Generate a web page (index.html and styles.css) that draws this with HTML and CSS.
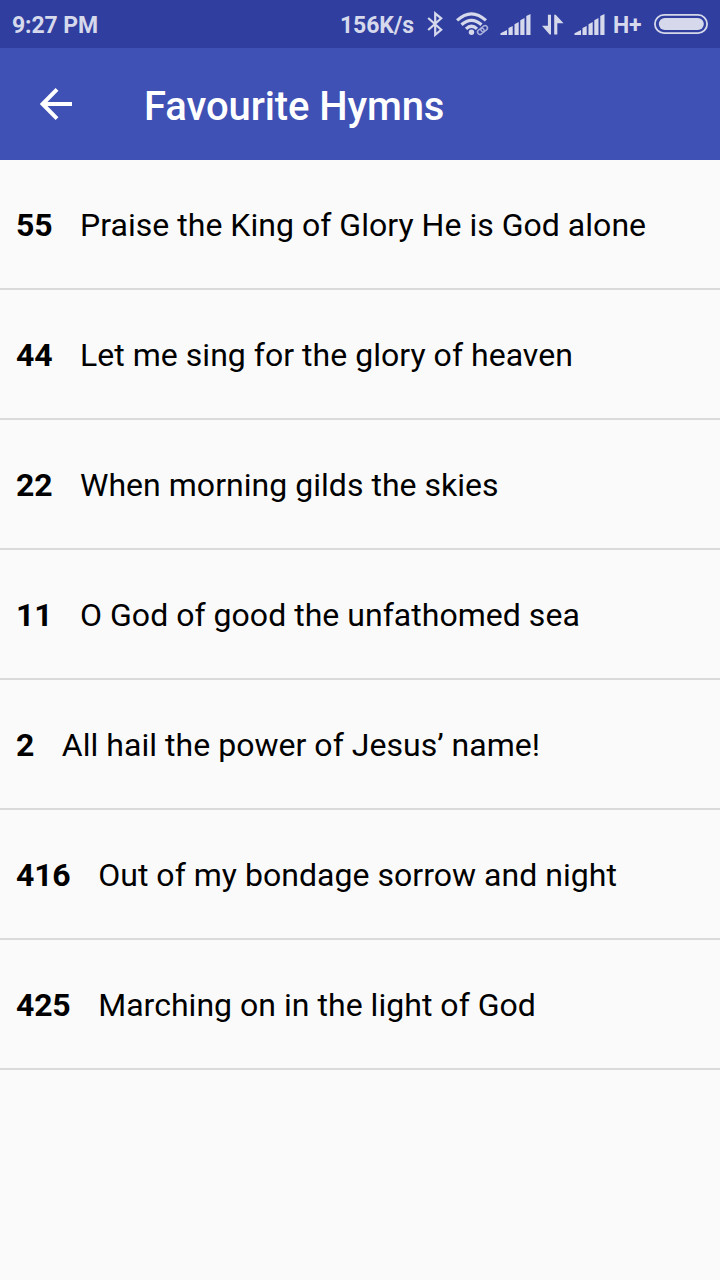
FILE: index.html
```html
<!DOCTYPE html>
<html lang="en">
<head>
<meta charset="UTF-8">
<meta name="viewport" content="width=device-width, initial-scale=1">
<title>Favourite Hymns</title>
<link rel="stylesheet" href="styles.css">
</head>
<body>
<div class="status_bar">
	<span class="time">9:27 PM</span>
	<div class="status_icons">
		<span class="speed">156K/s</span>
		<svg class="bluetooth" width="16" height="26" viewBox="0 0 16 26">
			<path d="M1.2 7 L14.2 18.8 L8.2 23.8 V2.4 L14.2 7.4 L1.2 19"/>
		</svg>
		<svg class="wifi" width="34" height="26" viewBox="0 0 34 26">
			<path class="wave" d="M1.1 9.4 Q15.5 -3.8 29.9 9.4"/>
			<path class="wave" d="M5.5 13.8 Q15.5 4.8 25.5 13.8"/>
			<path class="wave" d="M10 17.8 Q15.5 12.6 21 17.8"/>
			<circle cx="15.5" cy="21.3" r="2.7"/>
			<g class="link" transform="rotate(-38 26.5 19)">
				<rect x="20.9" y="16.6" width="7" height="4.8" rx="2.4"/>
				<rect x="25.1" y="16.6" width="7" height="4.8" rx="2.4"/>
			</g>
		</svg>
		<svg class="signal" width="31" height="22" viewBox="0 0 31 22">
			<path d="M0.5 21 V19.2 L7 16 V21 Z M8.5 21 V14 L12.7 12 V21 Z M14.5 21 V10.2 L18.7 8 V21 Z M20.3 21 V6.2 L24.5 4 V21 Z M26.3 21 V2 L30.5 0 V21 Z"/>
		</svg>
		<svg class="data" width="22" height="22" viewBox="0 0 22 22">
			<path d="M5.9 0.8 H9 V20.5 H7.6 L0 11.8 H5.9 Z M12.2 20.5 V0.8 H13.7 L21.5 9.2 H15.3 V20.5 Z"/>
		</svg>
		<svg class="signal signal_two" width="31" height="22" viewBox="0 0 31 22">
			<path d="M0.5 21 V19.2 L7 16 V21 Z M8.5 21 V14 L12.7 12 V21 Z M14.5 21 V10.2 L18.7 8 V21 Z M20.3 21 V6.2 L24.5 4 V21 Z M26.3 21 V2 L30.5 0 V21 Z"/>
		</svg>
		<span class="network">H+</span>
		<svg class="battery" width="54" height="20" viewBox="0 0 54 20">
			<rect class="shell" x="0.9" y="0.9" width="52.2" height="18.2" rx="9.1"/>
			<rect x="4.8" y="4" width="45" height="12" rx="6"/>
		</svg>
	</div>
</div>
<div class="toolbar">
	<svg class="back" width="32" height="32" viewBox="0 0 32 32">
		<path d="M32 16 H3 M17 1.4 L2.6 16 L17 30.6"/>
	</svg>
	<h1 class="title">Favourite Hymns</h1>
</div>
<ul class="hymn_list">
	<li><b>55</b><span>Praise the King of Glory He is God alone</span></li>
	<li><b>44</b><span>Let me sing for the glory of heaven</span></li>
	<li><b>22</b><span>When morning gilds the skies</span></li>
	<li><b>11</b><span>O God of good the unfathomed sea</span></li>
	<li><b>2</b><span>All hail the power of Jesus’ name!</span></li>
	<li><b>416</b><span>Out of my bondage sorrow and night</span></li>
	<li><b>425</b><span>Marching on in the light of God</span></li>
</ul>
</body>
</html>
```
FILE: styles.css
```css
body {
	margin: 0;
	background: #fafafa;
	color: #000;
	font-family: Roboto, "Liberation Sans", sans-serif;
}
.status_bar {
	display: flex;
	justify-content: space-between;
	height: 48px;
	box-sizing: border-box;
	padding: 0 12px;
	background: #303f9f;
	color: #d6d9ec;
	font-size: 23px;
	font-weight: 700;
	line-height: 52px;
	letter-spacing: -0.1px;
}
.status_icons {
	display: flex;
	align-items: flex-start;
	height: 48px;
}
.status_icons svg {
	display: block;
	fill: #d6d9ec;
}
.status_icons .bluetooth {
	margin: 11px 1px 0 13px;
	fill: none;
	stroke: #d6d9ec;
	stroke-width: 2.2;
}
.wifi {
	margin: 11px 0 0 12px;
}
.wifi .wave {
	fill: none;
	stroke: #d6d9ec;
	stroke-width: 3.2;
}
.wifi .link {
	fill: none;
	stroke: #aab0dc;
	stroke-width: 1.5;
}
.signal {
	margin: 14px 0 0 10.5px;
}
.data {
	margin: 14px 0 0 10.5px;
}
.network {
	margin-left: 7.5px;
}
.battery {
	margin: 14px 0 0 12.5px;
}
.battery .shell {
	fill: none;
	stroke: #d6d9ec;
	stroke-width: 1.8;
}
.toolbar {
	display: flex;
	align-items: center;
	height: 112px;
	padding-left: 40px;
	background: #3f51b5;
	color: #fff;
}
.back {
	fill: none;
	stroke: #fff;
	stroke-width: 4;
}
.title {
	margin: 6px 0 0 72px;
	font-size: 40px;
	font-weight: 500;
	line-height: 48px;
	letter-spacing: -0.1px;
}
.hymn_list {
	margin: 0;
	padding: 0;
	list-style: none;
	font-size: 32px;
}
.hymn_list li {
	display: flex;
	align-items: center;
	height: 126px;
	padding: 2px 16px 0;
	border-bottom: 2px solid #dadada;
}
.hymn_list b {
	letter-spacing: -0.2px;
}
.hymn_list span {
	margin-left: 27.7px;
	letter-spacing: 0.03px;
}
```
